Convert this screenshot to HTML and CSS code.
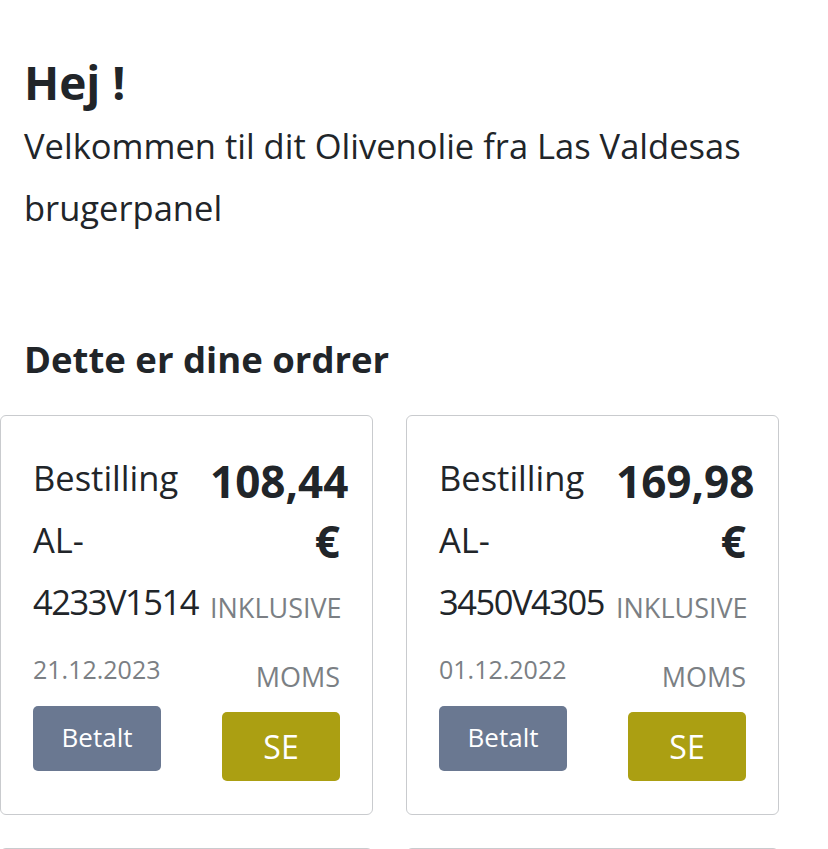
FILE: index.html
```html
<!DOCTYPE html>
<html lang="da">
<head>
<meta charset="utf-8">
<title>Brugerpanel</title>
<link rel="stylesheet" href="styles.css">
</head>
<body>
<main class="page">
  <section class="intro">
    <h1 class="greeting">Hej !</h1>
    <p class="welcome">Velkommen til dit Olivenolie fra Las Valdesas brugerpanel</p>
    <h2 class="section-title">Dette er dine ordrer</h2>
  </section>
  <section class="orders">
    <article class="order-card">
      <div class="order-col order-left">
        <p class="order-name">Bestilling AL-<wbr><span class="order-id">4233V1514</span></p>
        <p class="order-date">21.12.2023</p>
        <span class="badge-paid">Betalt</span>
      </div>
      <div class="order-col order-right">
        <p class="order-price">108,44 €</p>
        <p class="order-tax">inklusive moms</p>
        <button class="btn-see" type="button">SE</button>
      </div>
    </article>
    <article class="order-card">
      <div class="order-col order-left">
        <p class="order-name">Bestilling AL-<wbr><span class="order-id">3450V4305</span></p>
        <p class="order-date">01.12.2022</p>
        <span class="badge-paid">Betalt</span>
      </div>
      <div class="order-col order-right">
        <p class="order-price">169,98 €</p>
        <p class="order-tax">inklusive moms</p>
        <button class="btn-see" type="button">SE</button>
      </div>
    </article>
    <article class="order-card">
      <div class="order-col order-left">
        <p class="order-name">Bestilling AL-<wbr><span class="order-id">2871V0932</span></p>
        <p class="order-date">14.10.2022</p>
        <span class="badge-paid">Betalt</span>
      </div>
      <div class="order-col order-right">
        <p class="order-price">94,50 €</p>
        <p class="order-tax">inklusive moms</p>
        <button class="btn-see" type="button">SE</button>
      </div>
    </article>
    <article class="order-card">
      <div class="order-col order-left">
        <p class="order-name">Bestilling AL-<wbr><span class="order-id">2510V0417</span></p>
        <p class="order-date">02.09.2022</p>
        <span class="badge-paid">Betalt</span>
      </div>
      <div class="order-col order-right">
        <p class="order-price">121,20 €</p>
        <p class="order-tax">inklusive moms</p>
        <button class="btn-see" type="button">SE</button>
      </div>
    </article>
  </section>
</main>
</body>
</html>
```

FILE: styles.css
```css
* {
  box-sizing: border-box;
}

body {
  margin: 0;
  background: #ffffff;
  color: #212529;
  font-family: "Open Sans", "Noto Sans", sans-serif;
}

.page {
  width: 828px;
}

.intro {
  padding: 0 24px;
}

.greeting {
  margin: 55px 0 0;
  font-size: 46px;
  line-height: 55px;
  font-weight: 700;
}

.welcome {
  margin: 5px 0 0;
  font-size: 34.5px;
  line-height: 62px;
  font-weight: 400;
}

.section-title {
  margin: 96px 0 0;
  font-size: 36.5px;
  line-height: 48px;
  font-weight: 700;
}

.orders {
  margin-top: 32px;
  display: grid;
  grid-template-columns: 373px 373px;
  column-gap: 33px;
  row-gap: 33px;
}

.order-card {
  border: 1px solid #c9cbce;
  border-radius: 6px;
  padding: 31px 32px 33px 32px;
  display: flex;
  justify-content: space-between;
  align-items: flex-start;
}

.order-col p {
  margin: 0;
}

.order-left {
  width: 154px;
}

.order-right {
  width: 130px;
  display: flex;
  flex-direction: column;
  align-items: flex-end;
  text-align: right;
}

.order-name {
  font-size: 34.5px;
  line-height: 62px;
}

.order-id {
  letter-spacing: -1.5px;
}

.order-date {
  margin-top: 5px !important;
  font-size: 25px;
  line-height: 62px;
  color: #7b7f84;
}

.badge-paid {
  display: flex;
  align-items: center;
  justify-content: center;
  margin-top: 6px;
  width: 128px;
  height: 65px;
  padding-bottom: 4px;
  border-radius: 5px;
  background: #6a7891;
  color: #ffffff;
  font-size: 26px;
}

.order-price {
  margin-top: 4px !important;
  width: 100%;
  font-size: 44px;
  line-height: 60px;
  font-weight: 700;
}

.order-tax {
  margin-top: 2px !important;
  width: 100%;
  font-size: 27px;
  line-height: 69px;
  text-transform: uppercase;
  color: #7b7f84;
}

.btn-see {
  margin-top: 1px;
  width: 118px;
  height: 69px;
  border: 0;
  border-radius: 5px;
  background: #ab9f12;
  color: #ffffff;
  font-family: inherit;
  font-size: 32px;
  line-height: 1;
  cursor: pointer;
}
```
